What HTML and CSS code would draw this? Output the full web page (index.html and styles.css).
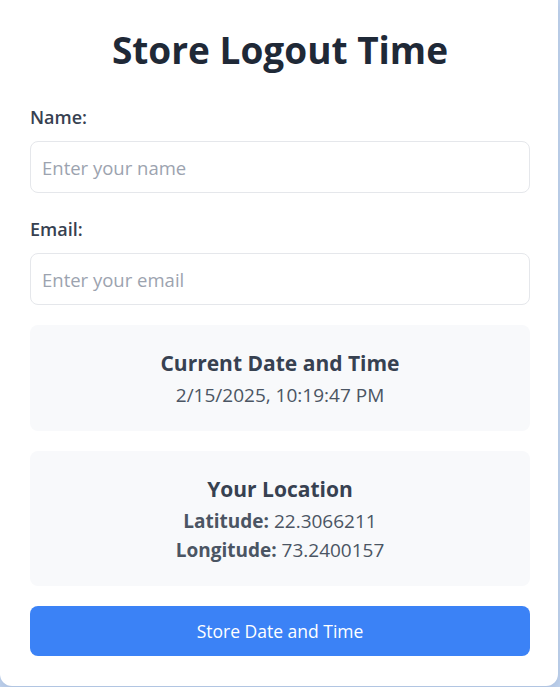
FILE: index.html
```html
<!DOCTYPE html>
<html lang="en">
<head>
<meta charset="utf-8">
<title>Store Logout Time</title>
<link rel="stylesheet" href="styles.css">
</head>
<body>
<main class="card">
  <h1 class="title">Store Logout Time</h1>
  <div class="field">
    <label class="label" for="name">Name:</label>
    <input class="input" id="name" type="text" placeholder="Enter your name">
  </div>
  <div class="field">
    <label class="label" for="email">Email:</label>
    <input class="input" id="email" type="email" placeholder="Enter your email">
  </div>
  <section class="panel">
    <h2 class="panel-title">Current Date and Time</h2>
    <p class="panel-text">2/15/2025, 10:19:47 PM</p>
  </section>
  <section class="panel">
    <h2 class="panel-title">Your Location</h2>
    <p class="panel-text"><strong>Latitude:</strong> 22.3066211</p>
    <p class="panel-text"><strong>Longitude:</strong> 73.2400157</p>
  </section>
  <button class="button" type="button">Store Date and Time</button>
</main>
</body>
</html>
```
FILE: styles.css
```css
* { box-sizing: border-box; }
html, body { margin: 0; padding: 0; }
body {
  background: #c0d3ee;
  font-family: "Open Sans", "Noto Sans", sans-serif;
  height: 687px;
  overflow: hidden;
}
.card {
  width: 558px;
  background: #ffffff;
  border-radius: 0 0 12px 12px;
  box-shadow: 0 4px 10px rgba(30, 60, 110, 0.12);
  padding: 26px 28px 30px 30px;
}
.title {
  margin: 0 0 29px;
  font-size: 37px;
  line-height: 48px;
  font-weight: 700;
  text-align: center;
  color: #1f2937;
}
.field { margin-bottom: 22px; }
.field + .field { margin-bottom: 20px; }
.label {
  display: block;
  font-size: 18px;
  line-height: 28px;
  font-weight: 600;
  color: #374151;
  margin-bottom: 10px;
}
.input {
  display: block;
  width: 100%;
  height: 52px;
  border: 1px solid #e5e7eb;
  border-radius: 8px;
  padding: 0 11px;
  font-family: inherit;
  font-size: 18.5px;
  color: #374151;
  background: #fff;
}
.input::placeholder { color: #9ca3af; }
.panel {
  background: #f8f9fb;
  border-radius: 8px;
  padding: 20px 20px 21px;
  text-align: center;
  margin-bottom: 20px;
}
.panel-title {
  margin: 0;
  font-size: 21px;
  line-height: 36px;
  font-weight: 700;
  color: #374151;
}
.panel-text {
  margin: 0;
  font-size: 19px;
  line-height: 29px;
  color: #4b5563;
}
.panel-text strong { color: #4b5563; font-weight: 700; }
.button {
  display: block;
  width: 100%;
  height: 50px;
  border: 0;
  border-radius: 8px;
  background: #3b82f6;
  color: #fff;
  font-family: inherit;
  font-size: 17.5px;
}
```
